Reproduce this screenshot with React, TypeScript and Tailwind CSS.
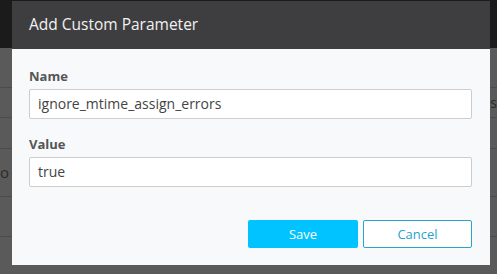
import React from "react";

export default function App() {
  const font = { fontFamily: '"Open Sans", "Noto Sans", sans-serif' };
  return (
    <div className="relative w-[497px] h-[274px] overflow-hidden bg-[#5a5a5a]" style={font}>
      {/* background page */}
      <div className="flex flex-col w-full h-full">
        <div className="h-[48px] bg-[#1b1b1b] shrink-0" />
        <div className="h-[40px] border-b border-[#4c4c4c] shrink-0" />
        <div className="h-[30px] border-b border-[#4c4c4c] shrink-0 flex justify-end items-center">
          <span className="text-[14px] text-[#2a2a2a] leading-none">s</span>
        </div>
        <div className="h-[31px] border-b border-[#4c4c4c] shrink-0" />
        <div className="h-[48px] border-b border-[#4c4c4c] shrink-0 flex items-center">
          <span className="text-[15px] text-[#2a2a2a] leading-none">o</span>
        </div>
        <div className="h-[40px] border-b border-[#4c4c4c] shrink-0" />
      </div>

      {/* modal */}
      <div className="absolute left-[12px] top-[1px] w-[478px] h-[264px] flex flex-col bg-[#f8f9fb]">
        <div className="h-[48px] bg-[#3e3e40] flex items-center px-[17px]">
          <span className="text-[15.5px] text-[#f2f2f2] leading-none">Add Custom Parameter</span>
        </div>
        <div className="flex flex-col pl-[17px] pr-[18px] pt-[18px]">
          <label className="text-[13px] font-bold text-[#555555] leading-[18px] mb-[4px]">Name</label>
          <div className="h-[30px] bg-white border border-[#cdcdcd] rounded-[2px] flex items-center px-[8px]">
            <span className="text-[14px] text-[#444444] leading-none">ignore_mtime_assign_errors</span>
          </div>
          <label className="text-[13px] font-bold text-[#555555] leading-[18px] mt-[16px] mb-[4px]">Value</label>
          <div className="h-[30px] bg-white border border-[#cdcdcd] rounded-[2px] flex items-center px-[8px]">
            <span className="text-[14px] text-[#444444] leading-none">true</span>
          </div>
          <div className="flex justify-end gap-[5px] mt-[33px]">
            <button className="w-[110px] h-[28px] bg-[#00c3ff] rounded-[2px] text-white text-[13px] leading-none">Save</button>
            <button className="w-[109px] h-[28px] bg-white border border-[#2ba3cf] rounded-[2px] text-[#2a9fd0] text-[13px] leading-none">Cancel</button>
          </div>
        </div>
      </div>
    </div>
  );
}
